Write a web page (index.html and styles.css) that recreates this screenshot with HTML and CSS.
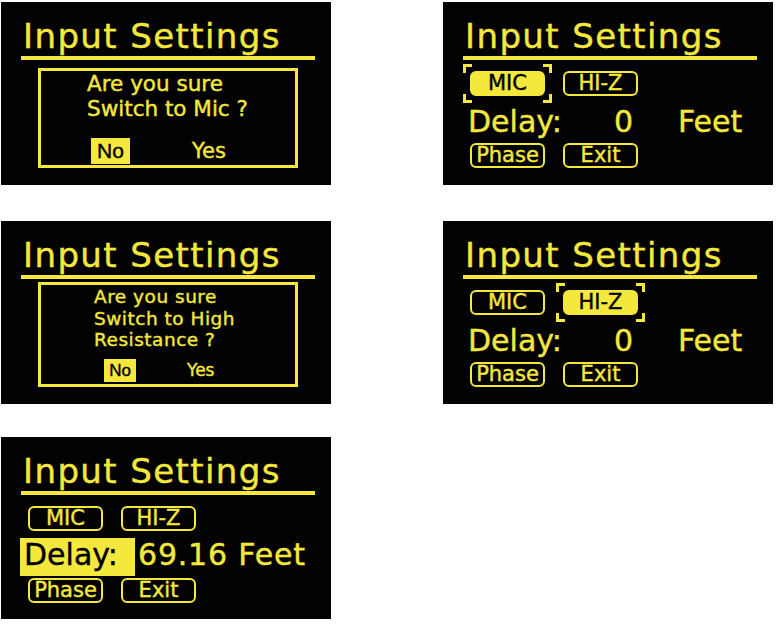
FILE: index.html
```html
<!DOCTYPE html>
<html lang="en">
<head>
  <meta charset="UTF-8" />
  <title>Input Settings screens</title>
  <link rel="stylesheet" href="styles.css">
</head>
<body>

  <div class="screens">

    <!-- conferma: passa a MIC -->
    <div class="screen">
      <div class="title">Input Settings</div>
      <div class="dialog">
        <div class="message">Are you sure<br>Switch to Mic ?</div>
        <div class="answers">
          <span class="answer-no">No</span>
          <span class="answer-yes">Yes</span>
        </div>
      </div>
    </div>

    <!-- MIC selezionato -->
    <div class="screen">
      <div class="title">Input Settings</div>
      <div class="btn-row">
        <div class="slot focused"><span class="chip active">MIC</span></div>
        <div class="slot"><span class="chip">HI-Z</span></div>
      </div>
      <div class="delay-row">
        <span class="delay-label">Delay:</span>
        <span class="delay-value">0</span>
        <span class="delay-unit">Feet</span>
      </div>
      <div class="bottom-row">
        <span class="chip">Phase</span>
        <span class="chip">Exit</span>
      </div>
    </div>

    <!-- conferma: passa a HI-Z -->
    <div class="screen">
      <div class="title">Input Settings</div>
      <div class="dialog dialog-tall">
        <div class="message">Are you sure<br>Switch to High<br>Resistance ?</div>
        <div class="answers">
          <span class="answer-no">No</span>
          <span class="answer-yes">Yes</span>
        </div>
      </div>
    </div>

    <!-- HI-Z selezionato -->
    <div class="screen">
      <div class="title">Input Settings</div>
      <div class="btn-row">
        <div class="slot"><span class="chip">MIC</span></div>
        <div class="slot focused"><span class="chip active">HI-Z</span></div>
      </div>
      <div class="delay-row">
        <span class="delay-label">Delay:</span>
        <span class="delay-value">0</span>
        <span class="delay-unit">Feet</span>
      </div>
      <div class="bottom-row">
        <span class="chip">Phase</span>
        <span class="chip">Exit</span>
      </div>
    </div>

    <!-- modifica delay -->
    <div class="screen screen-last">
      <div class="title">Input Settings</div>
      <div class="btn-row">
        <div class="slot"><span class="chip">MIC</span></div>
        <div class="slot"><span class="chip">HI-Z</span></div>
      </div>
      <div class="delay-edit">
        <span class="delay-hl">Delay:</span>
        <span class="delay-num">69.16 Feet</span>
      </div>
      <div class="bottom-row">
        <span class="chip">Phase</span>
        <span class="chip">Exit</span>
      </div>
    </div>

  </div>

</body>
</html>
```

FILE: styles.css
```css
:root {
  --yellow: #f4e83c;
}
* {
  box-sizing: border-box;
}
body {
  margin: 0;
  background: #fff;
  font-family: 'DejaVu Sans', Verdana, sans-serif;
  color: var(--yellow);
  -webkit-text-stroke-width: 0.4px;
}
.screens {
  display: grid;
  grid-template-columns: 330px 330px;
  grid-template-rows: 219px 216px 182px;
  column-gap: 112px;
  align-items: start;
  padding: 2px 0 0 1px;
}
.screen {
  background: #020203;
  height: 183px;
  padding-top: 17px;
  overflow: hidden;
}
.screen-last {
  height: 182px;
}
.title {
  font-size: 34px;
  line-height: 34px;
  letter-spacing: 1.4px;
  margin: 0 16px 0 20px;
  padding: 0 0 3px 2px;
  border-bottom: 4px solid var(--yellow);
  white-space: nowrap;
}

/* finestra di conferma */
.dialog {
  margin: 8px 0 0 37px;
  width: 260px;
  height: 100px;
  border: 3px solid var(--yellow);
}
.dialog .message {
  padding: 0 0 0 46px;
  font-size: 21.5px;
  line-height: 25px;
}
.dialog .answers {
  display: flex;
  margin-top: 17px;
  padding-left: 50px;
}
.answer-no {
  background: var(--yellow);
  color: #000;
  font-family: 'Liberation Sans', Arial, sans-serif;
  font-size: 21px;
  line-height: 26px;
  height: 26px;
  width: 39px;
  text-align: center;
}
.answer-yes {
  margin-left: 62px;
  font-size: 21px;
  line-height: 26px;
}
.dialog-tall {
  margin-top: 3px;
  height: 105px;
}
.dialog-tall .message {
  padding: 1px 0 0 53px;
  font-size: 18.5px;
  line-height: 21.5px;
  letter-spacing: 0.5px;
}
.dialog-tall .answers {
  margin-top: 8px;
  padding-left: 63px;
}
.dialog-tall .answer-no {
  font-size: 17px;
  line-height: 23px;
  height: 23px;
  width: 32px;
}
.dialog-tall .answer-yes {
  margin-left: 51px;
  font-size: 17px;
  line-height: 23px;
}

/* pulsanti */
.btn-row {
  display: flex;
  gap: 4px;
  margin-top: 4px;
  padding-left: 20px;
}
.slot {
  padding: 7px;
}
.slot.focused {
  background:
    linear-gradient(var(--yellow), var(--yellow)) left top / 9px 3px,
    linear-gradient(var(--yellow), var(--yellow)) left top / 3px 9px,
    linear-gradient(var(--yellow), var(--yellow)) right top / 9px 3px,
    linear-gradient(var(--yellow), var(--yellow)) right top / 3px 9px,
    linear-gradient(var(--yellow), var(--yellow)) left bottom / 9px 3px,
    linear-gradient(var(--yellow), var(--yellow)) left bottom / 3px 9px,
    linear-gradient(var(--yellow), var(--yellow)) right bottom / 9px 3px,
    linear-gradient(var(--yellow), var(--yellow)) right bottom / 3px 9px;
  background-repeat: no-repeat;
}
.chip {
  display: block;
  width: 75px;
  height: 25px;
  border: 2px solid var(--yellow);
  border-radius: 6px;
  font-size: 21px;
  line-height: 21px;
  text-align: center;
  white-space: nowrap;
}
.chip.active {
  background: var(--yellow);
  color: #000;
}
.bottom-row {
  display: flex;
  gap: 18px;
  margin-top: 2px;
  padding-left: 27px;
}

/* riga delay */
.delay-row {
  display: flex;
  height: 38px;
  padding-left: 25px;
  font-size: 30px;
  line-height: 38px;
  white-space: nowrap;
}
.delay-label {
  width: 146px;
}
.delay-value {
  width: 64px;
}
.delay-edit {
  display: flex;
  height: 38px;
  padding-left: 19px;
  font-size: 30px;
  line-height: 33px;
  white-space: nowrap;
}
.delay-hl {
  width: 115px;
  height: 38px;
  padding-left: 4px;
  background: var(--yellow);
  color: #000;
}
.delay-num {
  margin-left: 3px;
  letter-spacing: 0.8px;
}
```
